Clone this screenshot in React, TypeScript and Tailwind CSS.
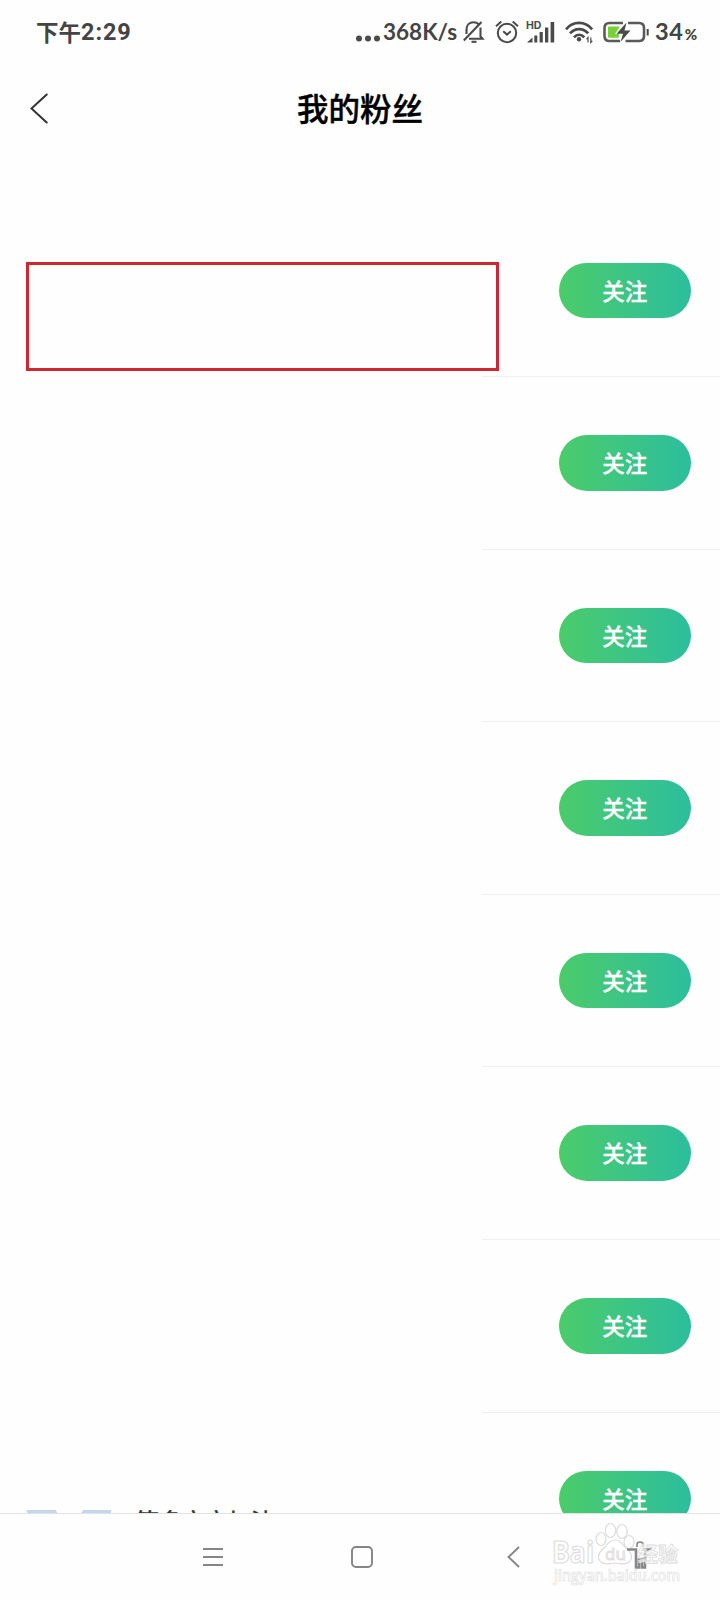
import type { ReactNode } from "react";

const cjk = "font-['Noto_Sans_CJK_SC',sans-serif]";

function BellOffIcon() {
  return (
    <svg className="w-[22px] h-[24px] shrink-0" viewBox="0 0 22 24" fill="none" stroke="#4a4a4a" strokeWidth="2.1">
      <path d="M3.5 14V9.5C3.5 5 6.5 2.2 10.500 2.2c2.5 0 4.4 1 5.600 2.6M17.5 7.5v9l2 2.3H6" />
      <path d="M.8 20.5 18.5 2" />
      <path d="M8.5 21.8h5" />
    </svg>
  );
}

function AlarmIcon() {
  return (
    <svg className="w-[24px] h-[24px] shrink-0" viewBox="0 0 24 24" fill="none" stroke="#4a4a4a" strokeWidth="2">
      <circle cx="12" cy="13" r="9.2" />
      <path d="M8.2 11.3 12 14.6l3.8-3.3" />
      <path d="M1 6.2 6.3 1.6M17.7 1.6 23 6.2" />
    </svg>
  );
}

function SignalIcon() {
  return (
    <svg className="w-[28px] h-[22px] shrink-0 overflow-visible" viewBox="0 0 28 22" fill="#4a4a4a">
      <text x="-1" y="8" fontSize="10.5" fontWeight="700" fontFamily="Inter, sans-serif">HD</text>
      <path d="M0 21.5 5.5 16.5v5zM7.3 14.5h3v7h-3zM12.6 11h3.2v10.5h-3.2zM18 6.5h3.3v15H18zM23.6 1h3.6v20.5h-3.6z" />
    </svg>
  );
}

function WifiIcon() {
  return (
    <svg className="w-[28px] h-[23px] shrink-0" viewBox="0 0 28 23" fill="none" stroke="#4a4a4a" strokeWidth="2.7">
      <path d="M1 8.3C8-.2 20-.2 27.2 8.3" />
      <path d="M5 12.4c5-5.8 13.2-5.8 18.2 0" />
      <path d="M9 16.3c3-3.4 7.3-3.4 10.3 0" />
      <circle cx="14" cy="18.3" r="2.2" fill="#4a4a4a" stroke="none" />
      <path d="M23 21.5v-5l-1.5 1.7M25.8 16.5v5l1.5-1.7" strokeWidth="1.2" />
    </svg>
  );
}

function BatteryIcon() {
  return (
    <svg className="w-[46px] h-[22px] shrink-0" viewBox="0 0 46 22" fill="none">
      <path d="M20 2H6.5Q1.5 2 1.5 7v8q0 5 5 5H17M25 2h11q5 0 5 5v8q0 5-5 5H22.5" stroke="#5a5a5a" strokeWidth="2.6" />
      <path d="M5 6.5Q5 5.5 6 5.5h11L12 13h4.5l-1 3.8H6q-1 0-1-1z" fill="#78d237" />
      <path d="M23.5 1.5 13.5 12.7h6.5L17.5 21 27.5 9.5h-6z" fill="#4a4a4a" />
      <path d="M43.7 8h2v6.5h-2z" fill="#4a4a4a" />
    </svg>
  );
}

function StatusBar() {
  return (
    <div className={`flex h-[64px] shrink-0 items-center text-[#444] font-bold ${cjk}`}>
      <div className="ml-[36px] flex w-[319px] items-center leading-none">
        <span className="-mt-px text-[22.5px]">下午</span>
        <span className="mt-[2px] text-[23.5px] tracking-[0.9px] font-['Roboto',sans-serif]">2:29</span>
      </div>
      <svg className="mt-[12px] h-[7px] w-[26px] shrink-0" viewBox="0 0 26 7" fill="#4a4a4a">
        <circle cx="4" cy="3.5" r="3" />
        <circle cx="13" cy="3.5" r="3" />
        <circle cx="22" cy="3.5" r="3" />
      </svg>
      <div className="ml-[2px] w-[79px] shrink-0 whitespace-nowrap text-[22.5px] leading-none font-['Lato',sans-serif]">368K/s</div>
      <div className="ml-px flex items-center">
        <BellOffIcon />
        <div className="ml-[10px] flex"><AlarmIcon /></div>
        <div className="ml-[8px] flex"><SignalIcon /></div>
        <div className="ml-[10px] flex"><WifiIcon /></div>
        <div className="ml-[10px] flex"><BatteryIcon /></div>
      </div>
      <div className="ml-[6px] flex items-baseline whitespace-nowrap leading-none font-['Lato',sans-serif]">
        <span className="text-[23.5px] tracking-[0.7px]">34</span>
        <span className="ml-px text-[15px] font-black">%</span>
      </div>
    </div>
  );
}

function Header() {
  return (
    <header className="flex h-[88px] shrink-0 items-center">
      <svg className="ml-[30px] h-[31px] w-[18px]" viewBox="0 0 18 31" fill="none" stroke="#333" strokeWidth="2" strokeLinecap="round">
        <path d="M16.7 1.5 1.5 15.5 16.7 29.5" />
      </svg>
      <h1 className={`ml-[249px] text-[31.5px] font-medium leading-none text-black [-webkit-text-stroke:0.4px_#000] ${cjk}`}>我的粉丝</h1>
    </header>
  );
}

function FanRow({ children }: { children?: ReactNode }) {
  return (
    <li className="flex h-[172.6px] shrink-0 justify-between">
      <div className="w-[482px]">{children}</div>
      <div className="flex w-[238px] items-start justify-end border-b border-[#f0f0f0] pr-[29px] pt-[58px]">
        <button className={`flex h-[55.5px] w-[132.5px] items-center justify-center rounded-full bg-linear-to-r from-[#4bcb69] to-[#2cbe9d] pb-px text-[22.5px] font-medium leading-none text-white [-webkit-text-stroke:0.3px_#fff] ${cjk}`}>
          关注
        </button>
      </div>
    </li>
  );
}

function Watermark() {
  return (
    <div className="absolute left-[552px] top-[8px] h-[78px] w-[140px]">
      <svg className="h-full w-full" viewBox="0 0 140 78" fill="#fff" stroke="#dcdcdc" strokeWidth="1.2">
        <text x="0" y="41" fontSize="30" fontWeight="700" fontFamily="Open Sans, sans-serif" textLength="42" lengthAdjust="spacingAndGlyphs">Bai</text>
        <ellipse cx="49" cy="17" rx="5" ry="6.5" />
        <ellipse cx="58.5" cy="8.5" rx="5.2" ry="7" />
        <ellipse cx="70" cy="9.5" rx="5.2" ry="7" />
        <ellipse cx="77" cy="20" rx="5" ry="6.5" />
        <path d="M63 18c-6 0-8 5-12 9-5 4-6 10-2 13 4 4 9 1 14 1s10 3 14-1c4-3 3-9-2-13-4-4-6-9-12-9z" />
        <text x="53" y="38" fontSize="17" strokeWidth="0.9" fontFamily="Open Sans, sans-serif">du</text>
        {/* figure of the system accessibility button, under the last two characters */}
        <g fill="none" stroke="#888">
          <path d="M85 25V22.5q0-2.500 3-2.500t3 2.500V25" strokeWidth="1.6" />
          <path d="M75 27.500h9v18h3v-8h3v8h3v-18h7" strokeWidth="2.6" />
        </g>
        <text x="86" y="40" fontSize="20" fontWeight="700" fontFamily="Noto Sans CJK SC, sans-serif" strokeWidth="0.8" fillOpacity="0.7">经验</text>
        <text x="2" y="59" fontSize="15.5" fontWeight="600" strokeWidth="0.6" fontFamily="Open Sans, sans-serif" textLength="126" lengthAdjust="spacingAndGlyphs">jingyan.baidu.com</text>
      </svg>
    </div>
  );
}

function NavBar() {
  return (
    <nav className="relative flex h-[87px] shrink-0 items-center border-t border-[#e2e2e2] text-[#858585]">
      <svg className="ml-[203px] h-[20px] w-[20px]" viewBox="0 0 20 20" stroke="currentColor" strokeWidth="1.9">
        <path d="M0 2h20M0 10h20M0 18h20" />
      </svg>
      <svg className="ml-[128px] h-[22px] w-[22px]" viewBox="0 0 22 22" fill="none" stroke="currentColor" strokeWidth="1.9">
        <rect x="1" y="1" width="20" height="20" rx="4" />
      </svg>
      <svg className="ml-[134px] h-[22px] w-[13px]" viewBox="0 0 13 22" fill="none" stroke="currentColor" strokeWidth="1.9">
        <path d="M12 1 1.5 11 12 21" />
      </svg>
      <Watermark />
    </nav>
  );
}

export default function App() {
  return (
    <div className="relative flex h-[1600px] w-[720px] flex-col overflow-hidden bg-[#fefefe]">
      <StatusBar />
      <Header />
      <ul className="flex h-[1361px] flex-col overflow-hidden pt-[52.5px]">
        {Array.from({ length: 7 }, (_, i) => (
          <FanRow key={i} />
        ))}
        <FanRow>
          <div className="flex items-start pt-[97px]">
            <svg className="ml-[26px] h-[8px] w-[86px] shrink-0" viewBox="0 0 86 8" fill="#c5d6f0">
              <path d="M0 0h30l3 8H4zM57 0h28v8H53z" />
            </svg>
            <span className={`ml-[24px] -mt-px whitespace-nowrap text-[23px] leading-[23px] text-[#333] [-webkit-text-stroke:0.6px_#333] ${cjk}`}>等多宝宝加油</span>
          </div>
        </FanRow>
      </ul>
      <NavBar />
      {/* highlight frame drawn over the first row */}
      <div className="absolute left-[26px] top-[262px] h-[109px] w-[473px] border-3 border-[#cf2731]" />
    </div>
  );
}
